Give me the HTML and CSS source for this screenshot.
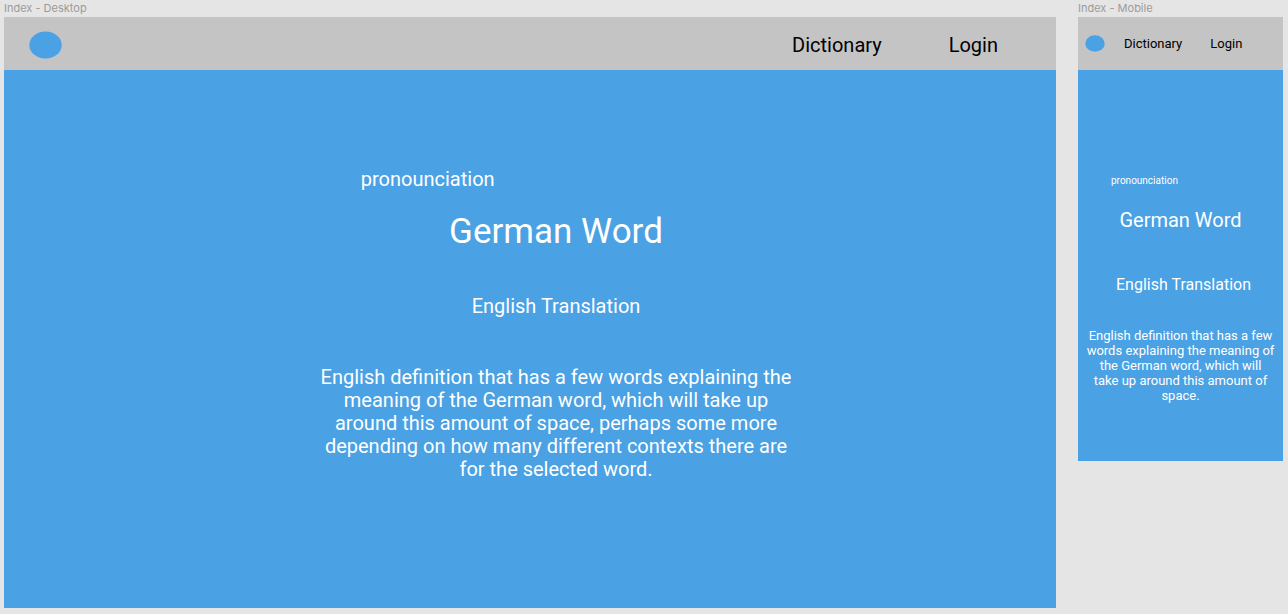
FILE: index.html
```html
<!DOCTYPE html>
<html lang="en">
<head>
<meta charset="utf-8">
<meta name="viewport" content="width=device-width, initial-scale=1">
<title>Index</title>
<link rel="stylesheet" href="styles.css">
</head>
<body>
<main class="canvas">
  <section class="artboard artboard-desktop">
    <h2 class="artboard-name">Index - Desktop</h2>
    <div class="frame">
      <header class="navbar">
        <svg class="logo" viewBox="0 0 33 28" aria-hidden="true"><ellipse cx="16.5" cy="14" rx="16.2" ry="13.6"/></svg>
        <nav class="links"><a href="#">Dictionary</a><a href="#">Login</a></nav>
      </header>
      <article class="entry">
        <p class="pronunciation">pronounciation</p>
        <h1 class="word">German Word</h1>
        <p class="translation">English Translation</p>
        <p class="definition">English definition that has a few words explaining the meaning of the German word, which will take up around this amount of space, perhaps some more depending on how many different contexts there are for the selected word.</p>
      </article>
    </div>
  </section>
  <section class="artboard artboard-mobile">
    <h2 class="artboard-name">Index - Mobile</h2>
    <div class="frame">
      <header class="navbar">
        <svg class="logo" viewBox="0 0 33 28" aria-hidden="true"><ellipse cx="16.5" cy="14" rx="16" ry="13.6"/></svg>
        <nav class="links"><a href="#">Dictionary</a><a href="#">Login</a></nav>
      </header>
      <article class="entry">
        <p class="pronunciation">pronounciation</p>
        <h1 class="word">German Word</h1>
        <p class="translation">English Translation</p>
        <p class="definition">English definition that has a few words explaining the meaning of the German word, which will<br>take up around this amount of space.</p>
      </article>
    </div>
  </section>
</main>
</body>
</html>
```
FILE: styles.css
```css
* {
  box-sizing: border-box;
}

body {
  margin: 0;
  background: #e5e5e5;
  font-family: Roboto, "Liberation Sans", sans-serif;
}

h1, h2, p {
  margin: 0;
  font-weight: 400;
}

.canvas {
  display: grid;
  grid-template-columns: minmax(0, 1052fr) minmax(0, 205fr);
  gap: 22px;
  align-items: start;
  padding: 0 5px 5px 4px;
}

.artboard-name {
  color: #9b9b9b;
  font-family: Inter, sans-serif;
  font-size: 11px;
  line-height: 17px;
}

.frame {
  background: #4aa1e4;
  color: #fff;
}

.navbar {
  display: flex;
  align-items: center;
  height: 53px;
  background: #c4c4c4;
}

.logo {
  display: block;
  fill: #4aa1e4;
}

.links {
  display: flex;
}

.links a {
  color: #000;
  text-decoration: none;
}

.entry {
  display: flex;
  flex-direction: column;
  align-items: center;
  text-align: center;
}

.pronunciation {
  align-self: flex-start;
}

/* Desktop artboard */
.artboard-desktop .navbar {
  justify-content: space-between;
  padding: 3px 58px 0 25px;
}

.artboard-desktop .logo {
  width: 33px;
}

.artboard-desktop .links {
  gap: 67px;
}

.artboard-desktop .links,
.artboard-desktop .entry {
  font-size: 20px;
  line-height: 23px;
}

.artboard-desktop .entry {
  padding: 98px 12px 127px 64px;
}

.artboard-desktop .pronunciation {
  margin-left: 30%;
}

.artboard-desktop .word {
  margin: 20px 0 42px;
  font-size: 35px;
  line-height: 42px;
}

.artboard-desktop .translation {
  margin-bottom: 48px;
}

.artboard-desktop .definition {
  max-width: 480px;
}

/* Mobile artboard */
.artboard-mobile .navbar {
  padding: 0 7px;
}

.artboard-mobile .logo {
  width: 20px;
}

.artboard-mobile .links {
  gap: 28px;
  margin-left: 19px;
  font-size: 13px;
  line-height: 15px;
}

.artboard-mobile .entry {
  padding: 105px 4px 58px;
  font-size: 13px;
  line-height: 15px;
}

.artboard-mobile .pronunciation {
  margin-left: 29px;
  font-size: 10px;
  line-height: 12px;
}

.artboard-mobile .word {
  margin: 22px 0 43px;
  font-size: 20px;
  line-height: 23px;
}

.artboard-mobile .translation {
  margin-bottom: 34px;
  padding-left: 6px;
  font-size: 16px;
  line-height: 19px;
}
```
